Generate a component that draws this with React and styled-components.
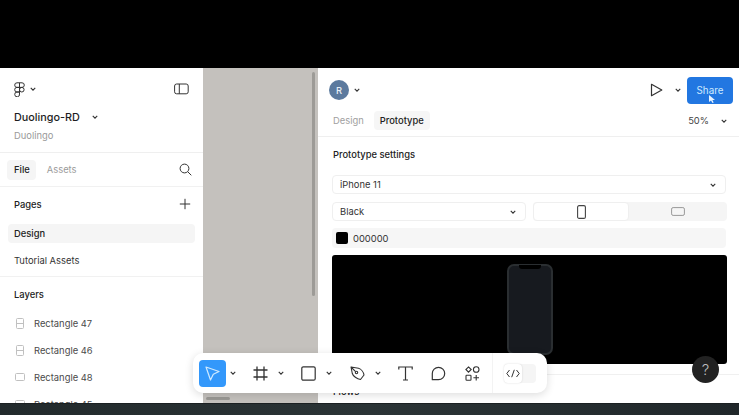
import React from "react";
import styled, { createGlobalStyle } from "styled-components";

const Global = createGlobalStyle`
  html, body { margin: 0; padding: 0; background: #000; }
  body { font-family: Inter, "Liberation Sans", sans-serif; overflow: hidden; }
  * { box-sizing: border-box; }
`;

const Page = styled.div`width:739px;height:415px;display:flex;flex-direction:column;background:#000;overflow:hidden;`;
const TopBand = styled.div`height:68px;background:#000;flex:none;`;
const BottomBand = styled.div`height:12px;flex:none;background:linear-gradient(90deg,#222a2c,#2b3436 50%,#20272a);border-top:1px solid #1b2022;`;
const Workspace = styled.div`flex:1;min-height:0;display:flex;position:relative;background:#fff;overflow:hidden;`;

const Sidebar = styled.aside`width:203px;flex:none;background:#fff;display:flex;flex-direction:column;overflow:hidden;`;
const FileHead = styled.div`height:85px;flex:none;padding:12px 14px 0 14px;border-bottom:1px solid #efefef;display:flex;flex-direction:column;`;
const LogoRow = styled.div`display:flex;align-items:center;justify-content:space-between;height:18px;`;
const LogoGroup = styled.div`display:flex;align-items:center;gap:5px;`;
const TitleRow = styled.div`display:flex;align-items:center;gap:12px;margin-top:10px;height:18px;`;
const Title = styled.span`font-size:10.8px;font-weight:500;color:#1e1e1e;`;
const SubTitle = styled.div`font-size:9.4px;color:#9a9a9a;margin-top:3px;line-height:13px;`;
const TabRow = styled.div`height:34px;flex:none;padding:0 11px 0 7px;border-bottom:1px solid #f1f1f1;display:flex;align-items:center;gap:11px;`;
const SideTab = styled.span`
  font-size:9.4px;height:20px;line-height:20px;border-radius:4px;
  padding:${p=>p.$active?"0 6px 0 7px":"0"};
  font-weight:${p=>p.$active?500:400};
  color:${p=>p.$active?"#222":"#9b9b9b"};
  background:${p=>p.$active?"#f5f5f5":"transparent"};
`;
const Spacer = styled.div`flex:1;`;
const SectionHead = styled.div`display:flex;align-items:center;justify-content:space-between;padding:0 12px 0 14px;height:34px;flex:none;font-size:9.4px;font-weight:500;color:#222;`;
const PageList = styled.div`padding:3px 8px 0;display:flex;flex-direction:column;gap:8px;flex:none;height:55px;`;
const PageRow = styled.div`
  height:19px;line-height:19px;padding:0 6px;border-radius:4px;font-size:9.4px;flex:none;
  color:${p=>p.$active?"#222":"#333"};font-weight:${p=>p.$active?500:400};
  background:${p=>p.$active?"#f5f5f5":"transparent"};
`;
const Divider = styled.div`height:1px;background:#f1f1f1;flex:none;`;
const LayerList = styled.div`display:flex;flex-direction:column;padding:0 0 0 15px;margin-top:-1px;`;
const LayerRow = styled.div`height:27px;display:flex;align-items:center;gap:9px;font-size:9.4px;color:#4a4a4a;flex:none;`;

const Canvas = styled.div`width:115px;flex:none;background:#c4c1bd;position:relative;`;
const VScroll = styled.div`position:absolute;left:109px;top:4px;width:3px;height:224px;background:#9d9b97;border-radius:2px;`;
const HScroll = styled.div`position:absolute;left:3px;bottom:3px;width:24px;height:3px;background:#9a9894;border-radius:2px;`;

const Panel = styled.section`flex:1;min-width:0;background:#fff;display:flex;flex-direction:column;overflow:hidden;`;
const PanelTop = styled.div`height:36px;flex:none;padding:8px 6px 0 11px;display:flex;align-items:center;`;
const Avatar = styled.div`width:20px;height:20px;border-radius:50%;background:#5c7a9e;color:#e8f0f7;font-size:9.4px;font-weight:500;display:flex;align-items:center;justify-content:center;margin-right:5px;`;
const PlayGroup = styled.div`display:flex;align-items:center;gap:12px;margin-right:6px;`;
const ShareButton = styled.button`width:46px;height:27px;border:none;border-radius:4px;background:#2277e1;color:#cdeaff;font:400 9.8px Inter,sans-serif;position:relative;padding:0;`;
const Pointer = styled.svg`position:absolute;left:22px;top:18px;`;
const PanelTabs = styled.div`height:33px;flex:none;border-bottom:1px solid #efefef;display:flex;align-items:flex-start;padding:7px 12px 0 15px;`;
const PanelTab = styled.span`
  height:19px;line-height:19px;border-radius:4px;font-size:9.4px;
  padding:0 ${p=>p.$active?"6px":"0"};
  margin-right:${p=>p.$active?"0":"10px"};
  font-weight:${p=>p.$active?500:400};
  color:${p=>p.$active?"#222":"#a0a0a0"};
  background:${p=>p.$active?"#f6f6f6":"transparent"};
`;
const Zoom = styled.div`display:flex;align-items:center;gap:12px;font-size:9.4px;color:#444;height:19px;`;
const Settings = styled.div`padding:0 12px 0 14px;display:flex;flex-direction:column;flex:none;`;
const SettingsTitle = styled.div`height:38px;line-height:36px;font-size:9.4px;font-weight:500;color:#222;padding-left:1px;`;
const Select = styled.div`
  height:19px;flex:none;width:${p=>p.$fixed?"194px":"394px"};border:1px solid #efefef;border-radius:4px;
  padding:0 9px 0 7px;display:flex;align-items:center;justify-content:space-between;font-size:9.4px;color:#333;
`;
const Row = styled.div`display:flex;gap:7px;margin-top:8px;flex:none;`;
const Segmented = styled.div`flex:1;height:19px;background:#f5f5f5;border-radius:4px;display:flex;`;
const Segment = styled.div`
  flex:${p=>p.$active?"0 0 96px":"1"};display:flex;align-items:center;justify-content:center;border-radius:4px;
  background:${p=>p.$active?"#fff":"transparent"};
  border:${p=>p.$active?"1px solid #efefef":"none"};
`;
const ColorRow = styled.div`height:20px;margin-top:7px;flex:none;background:#f6f6f6;border-radius:4px;display:flex;align-items:center;gap:5px;padding:0 4px;font-size:9.4px;color:#333;width:394px;`;
const Swatch = styled.div`width:12px;height:12px;background:#000;border-radius:2px;`;
const Preview = styled.div`margin-top:7px;height:109px;width:395px;flex:none;background:#000;border-radius:3px;display:flex;justify-content:center;padding:9px 0;`;
const Phone = styled.div`width:46px;height:91px;border:2px solid #2a2e31;border-radius:7px;background:#171a1f;position:relative;`;
const Notch = styled.div`position:absolute;top:-1px;left:10px;width:22px;height:4px;background:#000;border-radius:0 0 3px 3px;`;
const FlowsDivider = styled.div`height:1px;background:#f0f0f0;margin-top:10px;flex:none;`;
const FlowsHead = styled.div`font-size:9.4px;font-weight:500;color:#222;padding:11px 0 0 15px;`;

const Toolbar = styled.div`
  position:absolute;left:193px;top:285px;width:354px;height:40px;background:#fff;border-radius:10px;
  box-shadow:0 2px 8px rgba(0,0,0,.14);display:flex;align-items:center;padding:0 0 0 6px;
`;
const ToolButton = styled.div`
  width:${p=>p.$w||27}px;height:27px;flex:none;border-radius:4px;display:flex;align-items:center;justify-content:center;
  background:${p=>p.$active?"#3398fb":"transparent"};
`;
const CaretSlot = styled.div`width:${p=>p.$w||14}px;flex:none;display:flex;align-items:center;justify-content:center;`;
const ToolGap = styled.div`width:${p=>p.$w}px;flex:none;`;
const ModeSep = styled.div`width:1px;height:40px;background:#f3f3f3;flex:none;margin-left:7px;`;
const ModeSwitch = styled.div`margin-left:11px;width:32px;height:19px;background:#f5f5f5;border-radius:4px;display:flex;flex:none;`;
const ModeKnob = styled.div`width:18px;height:19px;background:#fff;border-radius:4px;box-shadow:0 0 2px rgba(0,0,0,.15);display:flex;align-items:center;justify-content:center;`;
const Help = styled.div`position:absolute;left:692px;top:288px;width:27px;height:27px;border-radius:50%;background:#222;color:#bdbdbd;font-size:15px;display:flex;align-items:center;justify-content:center;font-family:Inter,sans-serif;font-weight:300;`;

const Caret = ({c="#333",w=6}) => (
  <svg width={w} height={w} viewBox="0 0 8 8" fill="none"><path d="M1 2.5 4 5.5 7 2.5" stroke={c} strokeWidth="1.5"/></svg>
);
const Stroke = ({size=16,w,h,children,sw=1}) => (
  <svg width={w||size} height={h||size} viewBox={`0 0 ${w||size} ${h||size}`} fill="none" stroke="#333" strokeWidth={sw}>{children}</svg>
);
const FigmaLogo = () => (
  <Stroke w={11} h={15}>
    <path d="M5.5.8H3a2.3 2.3 0 0 0 0 4.6h2.5zM5.5.8H8a2.3 2.3 0 0 1 0 4.6H5.5zM5.5 5.4H3a2.3 2.3 0 0 0 0 4.6h2.5zM5.5 7.7a2.3 2.3 0 1 0 4.6 0 2.3 2.3 0 0 0-4.6 0zM3 10h2.5v2a2.4 2.4 0 1 1-2.5-2z"/>
  </Stroke>
);
const PanelIcon = () => (
  <Stroke w={15} h={12}><rect x=".6" y="1" width="13.6" height="9.8" rx="2"/><path d="M5.3 1v9.8"/></Stroke>
);
const SearchIcon = () => (
  <Stroke size={13}><circle cx="5.5" cy="5.5" r="4.4"/><path d="M8.8 8.8 12.3 12.3"/></Stroke>
);
const PlusIcon = () => (
  <Stroke size={12}><path d="M6 .8v10.4M.8 6h10.4"/></Stroke>
);
const FrameLayer = () => (
  <svg width="10" height="13" viewBox="0 0 10 13" fill="none" stroke="#c0c0c0"><rect x="1.5" y="1.5" width="7" height="10" rx="1"/><path d="M1.5 6.5h7"/></svg>
);
const RectLayer = () => (
  <svg width="10" height="13" viewBox="0 0 10 13" fill="none" stroke="#c0c0c0"><rect x=".5" y="2.5" width="9" height="7" rx="1"/></svg>
);

const pages = [{n:"Design",a:true},{n:"Tutorial Assets"}];
const layers = [["Rectangle 47",FrameLayer],["Rectangle 46",FrameLayer],["Rectangle 48",RectLayer],["Rectangle 45",RectLayer]];

export default function App(){
  return (
    <Page>
      <Global/>
      <TopBand/>
      <Workspace>
        <Sidebar>
          <FileHead>
            <LogoRow>
              <LogoGroup><FigmaLogo/><Caret/></LogoGroup>
              <PanelIcon/>
            </LogoRow>
            <TitleRow><Title>Duolingo-RD</Title><Caret/></TitleRow>
            <SubTitle>Duolingo</SubTitle>
          </FileHead>
          <TabRow>
            <SideTab $active>File</SideTab>
            <SideTab>Assets</SideTab>
            <Spacer/>
            <SearchIcon/>
          </TabRow>
          <SectionHead>Pages<PlusIcon/></SectionHead>
          <PageList>
            {pages.map(p=><PageRow key={p.n} $active={p.a}>{p.n}</PageRow>)}
          </PageList>
          <Divider/>
          <SectionHead>Layers</SectionHead>
          <LayerList>
            {layers.map(([n,I])=><LayerRow key={n}><I/>{n}</LayerRow>)}
          </LayerList>
        </Sidebar>
        <Canvas><VScroll/><HScroll/></Canvas>
        <Panel>
          <PanelTop>
            <Avatar>R</Avatar>
            <Caret/>
            <Spacer/>
            <PlayGroup>
              <Stroke w={13} h={14} sw={1.2}><path d="M1.5 1.3v11.4L11.8 7z" strokeLinejoin="round"/></Stroke>
              <Caret/>
            </PlayGroup>
            <ShareButton>Share
              <Pointer width="6" height="8" viewBox="0 0 6 8"><path d="M0 0v7l2-1.6L3.5 8l1.2-.6-1.3-2.4H6z" fill="#e6f2ff"/></Pointer>
            </ShareButton>
          </PanelTop>
          <PanelTabs>
            <PanelTab>Design</PanelTab>
            <PanelTab $active>Prototype</PanelTab>
            <Spacer/>
            <Zoom>50%<Caret/></Zoom>
          </PanelTabs>
          <Settings>
            <SettingsTitle>Prototype settings</SettingsTitle>
            <Select>iPhone 11<Caret/></Select>
            <Row>
              <Select $fixed>Black<Caret/></Select>
              <Segmented>
                <Segment $active>
                  <svg width="9" height="14" viewBox="0 0 9 14" fill="none" stroke="#444" strokeWidth="1.1"><rect x=".6" y=".6" width="7.8" height="12.8" rx="1.5"/></svg>
                </Segment>
                <Segment>
                  <svg width="14" height="9" viewBox="0 0 14 9" fill="none" stroke="#999"><rect x=".6" y=".6" width="12.8" height="7.8" rx="1.5"/></svg>
                </Segment>
              </Segmented>
            </Row>
            <ColorRow><Swatch/>000000</ColorRow>
            <Preview><Phone><Notch/></Phone></Preview>
          </Settings>
          <FlowsDivider/>
          <FlowsHead>Flows</FlowsHead>
        </Panel>
        <Toolbar>
          <ToolButton $active>
            <svg width="17" height="17" viewBox="0 0 17 17" fill="none" stroke="#cfeaff" strokeWidth="1.2"><path d="M2 2 15 6.5 9.3 9.3 6.5 15z" strokeLinejoin="round"/></svg>
          </ToolButton>
          <CaretSlot><Caret/></CaretSlot>
          <ToolGap $w={9}/>
          <ToolButton $w={22}>
            <Stroke size={15} sw={1.3}><path d="M4 .5v14M11 .5v14M.5 4h14M.5 11h14"/></Stroke>
          </ToolButton>
          <CaretSlot $w={20}><Caret/></CaretSlot>
          <ToolGap $w={5}/>
          <ToolButton $w={24}>
            <Stroke size={15} sw={1.2}><rect x=".8" y=".8" width="13.4" height="13.4" rx="1.5"/></Stroke>
          </ToolButton>
          <CaretSlot $w={18}><Caret/></CaretSlot>
          <ToolGap $w={6}/>
          <ToolButton $w={26}>
            <Stroke size={15} sw={1.1}><path d="M1 1 8.5 2.3C11 3 13.5 6 14 9l-3.5 4.5C7 13 3 10 2.3 7.5zM1 1 5.6 5.6" strokeLinejoin="round"/><circle cx="6.5" cy="6.5" r="1.2"/></Stroke>
          </ToolButton>
          <CaretSlot $w={16}><Caret/></CaretSlot>
          <ToolGap $w={6}/>
          <ToolButton $w={26}>
            <Stroke w={15} h={15} sw={1.2}><path d="M.8 3.5V1h13.4v2.5M7.5 1v13M5 14h5"/></Stroke>
          </ToolButton>
          <ToolGap $w={7}/>
          <ToolButton $w={26}>
            <Stroke size={15} sw={1.2}><path d="M1.3 13.7V7.5a6.2 6.2 0 1 1 6.2 6.2z" strokeLinejoin="round"/></Stroke>
          </ToolButton>
          <ToolGap $w={8}/>
          <ToolButton $w={26}>
            <Stroke size={15} sw={1.1}><circle cx="11.2" cy="3.5" r="2.8"/><path d="M3.5.9 6.2 3.5 3.5 6.2.9 3.5z"/><rect x="1" y="9.2" width="5" height="5" rx=".7"/><path d="M11.2 9v5.6M8.4 11.8h5.6"/></Stroke>
          </ToolButton>
          <ModeSep/>
          <ModeSwitch>
            <ModeKnob>
              <svg width="14" height="9" viewBox="0 0 14 9" fill="none" stroke="#333" strokeWidth="1"><path d="M3.5 1 .8 4.5 3.5 8M10.5 1l2.7 3.5L10.5 8M8.3 .8 5.7 8.2"/></svg>
            </ModeKnob>
          </ModeSwitch>
        </Toolbar>
        <Help>?</Help>
      </Workspace>
      <BottomBand/>
    </Page>
  );
}
